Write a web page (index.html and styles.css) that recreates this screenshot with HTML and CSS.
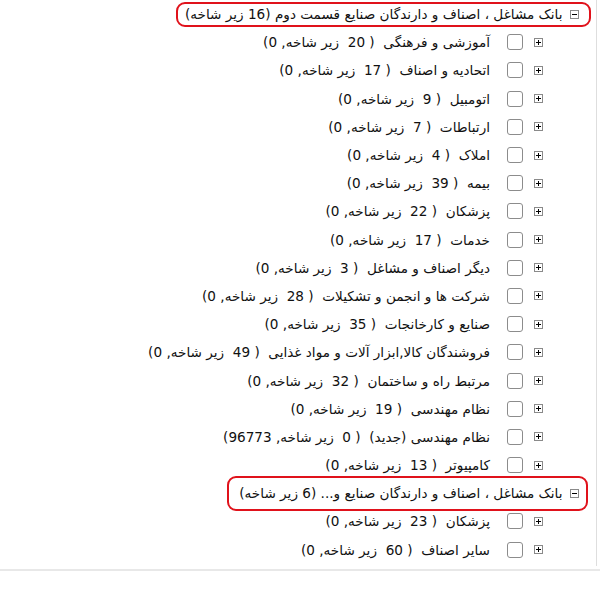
FILE: index.html
```html
<!DOCTYPE html>
<html lang="fa">
<head>
<meta charset="utf-8">
<title>Tree</title>
<link rel="stylesheet" href="styles.css">
</head>
<body>
<div class="panel">
  <ul class="tree" dir="rtl">
    <li class="row row--head">
      <span class="head-box head-box--first">
        <svg class="tog" width="9" height="9" viewBox="0 0 9 9"><rect x="0.5" y="0.5" width="8" height="8" fill="#fff" stroke="#8a8a8a"/><path d="M2 4.5h5" stroke="#000"/></svg>
        <span class="label">بانک مشاغل ، اصناف و دارندگان صنایع قسمت دوم (16 زیر شاخه)</span>
      </span>
    </li>
    <li class="row row--child"><svg class="tog" width="9" height="9" viewBox="0 0 9 9"><rect x="0.5" y="0.5" width="8" height="8" fill="#fff" stroke="#8a8a8a"/><path d="M2 4.5h5M4.5 2v5" stroke="#000"/></svg><span class="chk"></span><span class="label">آموزشی و فرهنگی  ( 20  زیر شاخه, 0)</span></li>
    <li class="row row--child"><svg class="tog" width="9" height="9" viewBox="0 0 9 9"><rect x="0.5" y="0.5" width="8" height="8" fill="#fff" stroke="#8a8a8a"/><path d="M2 4.5h5M4.5 2v5" stroke="#000"/></svg><span class="chk"></span><span class="label">اتحادیه و اصناف  ( 17  زیر شاخه, 0)</span></li>
    <li class="row row--child"><svg class="tog" width="9" height="9" viewBox="0 0 9 9"><rect x="0.5" y="0.5" width="8" height="8" fill="#fff" stroke="#8a8a8a"/><path d="M2 4.5h5M4.5 2v5" stroke="#000"/></svg><span class="chk"></span><span class="label">اتومبیل  ( 9  زیر شاخه, 0)</span></li>
    <li class="row row--child"><svg class="tog" width="9" height="9" viewBox="0 0 9 9"><rect x="0.5" y="0.5" width="8" height="8" fill="#fff" stroke="#8a8a8a"/><path d="M2 4.5h5M4.5 2v5" stroke="#000"/></svg><span class="chk"></span><span class="label">ارتباطات  ( 7  زیر شاخه, 0)</span></li>
    <li class="row row--child"><svg class="tog" width="9" height="9" viewBox="0 0 9 9"><rect x="0.5" y="0.5" width="8" height="8" fill="#fff" stroke="#8a8a8a"/><path d="M2 4.5h5M4.5 2v5" stroke="#000"/></svg><span class="chk"></span><span class="label">املاک  ( 4  زیر شاخه, 0)</span></li>
    <li class="row row--child"><svg class="tog" width="9" height="9" viewBox="0 0 9 9"><rect x="0.5" y="0.5" width="8" height="8" fill="#fff" stroke="#8a8a8a"/><path d="M2 4.5h5M4.5 2v5" stroke="#000"/></svg><span class="chk"></span><span class="label">بیمه  ( 39  زیر شاخه, 0)</span></li>
    <li class="row row--child"><svg class="tog" width="9" height="9" viewBox="0 0 9 9"><rect x="0.5" y="0.5" width="8" height="8" fill="#fff" stroke="#8a8a8a"/><path d="M2 4.5h5M4.5 2v5" stroke="#000"/></svg><span class="chk"></span><span class="label">پزشکان  ( 22  زیر شاخه, 0)</span></li>
    <li class="row row--child"><svg class="tog" width="9" height="9" viewBox="0 0 9 9"><rect x="0.5" y="0.5" width="8" height="8" fill="#fff" stroke="#8a8a8a"/><path d="M2 4.5h5M4.5 2v5" stroke="#000"/></svg><span class="chk"></span><span class="label">خدمات  ( 17  زیر شاخه, 0)</span></li>
    <li class="row row--child"><svg class="tog" width="9" height="9" viewBox="0 0 9 9"><rect x="0.5" y="0.5" width="8" height="8" fill="#fff" stroke="#8a8a8a"/><path d="M2 4.5h5M4.5 2v5" stroke="#000"/></svg><span class="chk"></span><span class="label">دیگر اصناف و مشاغل  ( 3  زیر شاخه, 0)</span></li>
    <li class="row row--child"><svg class="tog" width="9" height="9" viewBox="0 0 9 9"><rect x="0.5" y="0.5" width="8" height="8" fill="#fff" stroke="#8a8a8a"/><path d="M2 4.5h5M4.5 2v5" stroke="#000"/></svg><span class="chk"></span><span class="label">شرکت ها و انجمن و تشکیلات  ( 28  زیر شاخه, 0)</span></li>
    <li class="row row--child"><svg class="tog" width="9" height="9" viewBox="0 0 9 9"><rect x="0.5" y="0.5" width="8" height="8" fill="#fff" stroke="#8a8a8a"/><path d="M2 4.5h5M4.5 2v5" stroke="#000"/></svg><span class="chk"></span><span class="label">صنایع و کارخانجات  ( 35  زیر شاخه, 0)</span></li>
    <li class="row row--child"><svg class="tog" width="9" height="9" viewBox="0 0 9 9"><rect x="0.5" y="0.5" width="8" height="8" fill="#fff" stroke="#8a8a8a"/><path d="M2 4.5h5M4.5 2v5" stroke="#000"/></svg><span class="chk"></span><span class="label">فروشندگان کالا,ابزار آلات و مواد غذایی  ( 49  زیر شاخه, 0)</span></li>
    <li class="row row--child"><svg class="tog" width="9" height="9" viewBox="0 0 9 9"><rect x="0.5" y="0.5" width="8" height="8" fill="#fff" stroke="#8a8a8a"/><path d="M2 4.5h5M4.5 2v5" stroke="#000"/></svg><span class="chk"></span><span class="label">مرتبط راه و ساختمان  ( 32  زیر شاخه, 0)</span></li>
    <li class="row row--child"><svg class="tog" width="9" height="9" viewBox="0 0 9 9"><rect x="0.5" y="0.5" width="8" height="8" fill="#fff" stroke="#8a8a8a"/><path d="M2 4.5h5M4.5 2v5" stroke="#000"/></svg><span class="chk"></span><span class="label">نظام مهندسی  ( 19  زیر شاخه, 0)</span></li>
    <li class="row row--child"><svg class="tog" width="9" height="9" viewBox="0 0 9 9"><rect x="0.5" y="0.5" width="8" height="8" fill="#fff" stroke="#8a8a8a"/><path d="M2 4.5h5M4.5 2v5" stroke="#000"/></svg><span class="chk"></span><span class="label">نظام مهندسی (جدید)  ( 0  زیر شاخه, 96773)</span></li>
    <li class="row row--child"><svg class="tog" width="9" height="9" viewBox="0 0 9 9"><rect x="0.5" y="0.5" width="8" height="8" fill="#fff" stroke="#8a8a8a"/><path d="M2 4.5h5M4.5 2v5" stroke="#000"/></svg><span class="chk"></span><span class="label">کامپیوتر  ( 13  زیر شاخه, 0)</span></li>
    <li class="row row--head">
      <span class="head-box head-box--second">
        <svg class="tog" width="9" height="9" viewBox="0 0 9 9"><rect x="0.5" y="0.5" width="8" height="8" fill="#fff" stroke="#8a8a8a"/><path d="M2 4.5h5" stroke="#000"/></svg>
        <span class="label">بانک مشاغل ، اصناف و دارندگان صنایع و... (6 زیر شاخه)</span>
      </span>
    </li>
    <li class="row row--child"><svg class="tog" width="9" height="9" viewBox="0 0 9 9"><rect x="0.5" y="0.5" width="8" height="8" fill="#fff" stroke="#8a8a8a"/><path d="M2 4.5h5M4.5 2v5" stroke="#000"/></svg><span class="chk"></span><span class="label">پزشکان  ( 23  زیر شاخه, 0)</span></li>
    <li class="row row--child"><svg class="tog" width="9" height="9" viewBox="0 0 9 9"><rect x="0.5" y="0.5" width="8" height="8" fill="#fff" stroke="#8a8a8a"/><path d="M2 4.5h5M4.5 2v5" stroke="#000"/></svg><span class="chk"></span><span class="label">سایر اصناف  ( 60  زیر شاخه, 0)</span></li>
  </ul>
</div>
<div class="rule"></div>
</body>
</html>
```
FILE: styles.css
```css
html, body {
  margin: 0;
  padding: 0;
  background: #fff;
}
body {
  font-family: "DejaVu Sans", "Noto Sans", sans-serif;
  font-size: 13.6px;
  color: #111;
}
.panel {
  width: 597px;
  height: 566px;
  border-right: 1px solid #dedede;
  box-sizing: border-box;
}
.tree {
  list-style: none;
  margin: 0;
  padding: 0;
  display: flex;
  flex-direction: column;
  align-items: flex-start;
}
.row {
  height: 28.2px;
  display: flex;
  align-items: center;
  white-space: pre;
}
.row--child {
  padding-right: 53px;
}
.row--head {
  padding-right: 5px;
}
.head-box {
  display: flex;
  align-items: center;
  border: 2.5px solid #e0121b;
  border-radius: 9px;
  box-sizing: border-box;
}
.head-box--first {
  height: 25px;
  padding: 0 10.5px 0 7px;
}
.head-box--second {
  height: 35px;
  margin-right: 3px;
  padding: 0 7.5px 0 10px;
}
.head-box .tog {
  margin-left: 7px;
}
.tog {
  flex: none;
  display: block;
}
.chk {
  flex: none;
  width: 16px;
  height: 16px;
  margin-right: 11px;
  margin-left: 17px;
  border: 1px solid #8c8c8c;
  border-radius: 3px;
  box-sizing: border-box;
  background: #fff;
}
.label {
  line-height: 16px;
}
.rule {
  height: 2px;
  margin-top: 3px;
  background: #e8e8e8;
}
```
